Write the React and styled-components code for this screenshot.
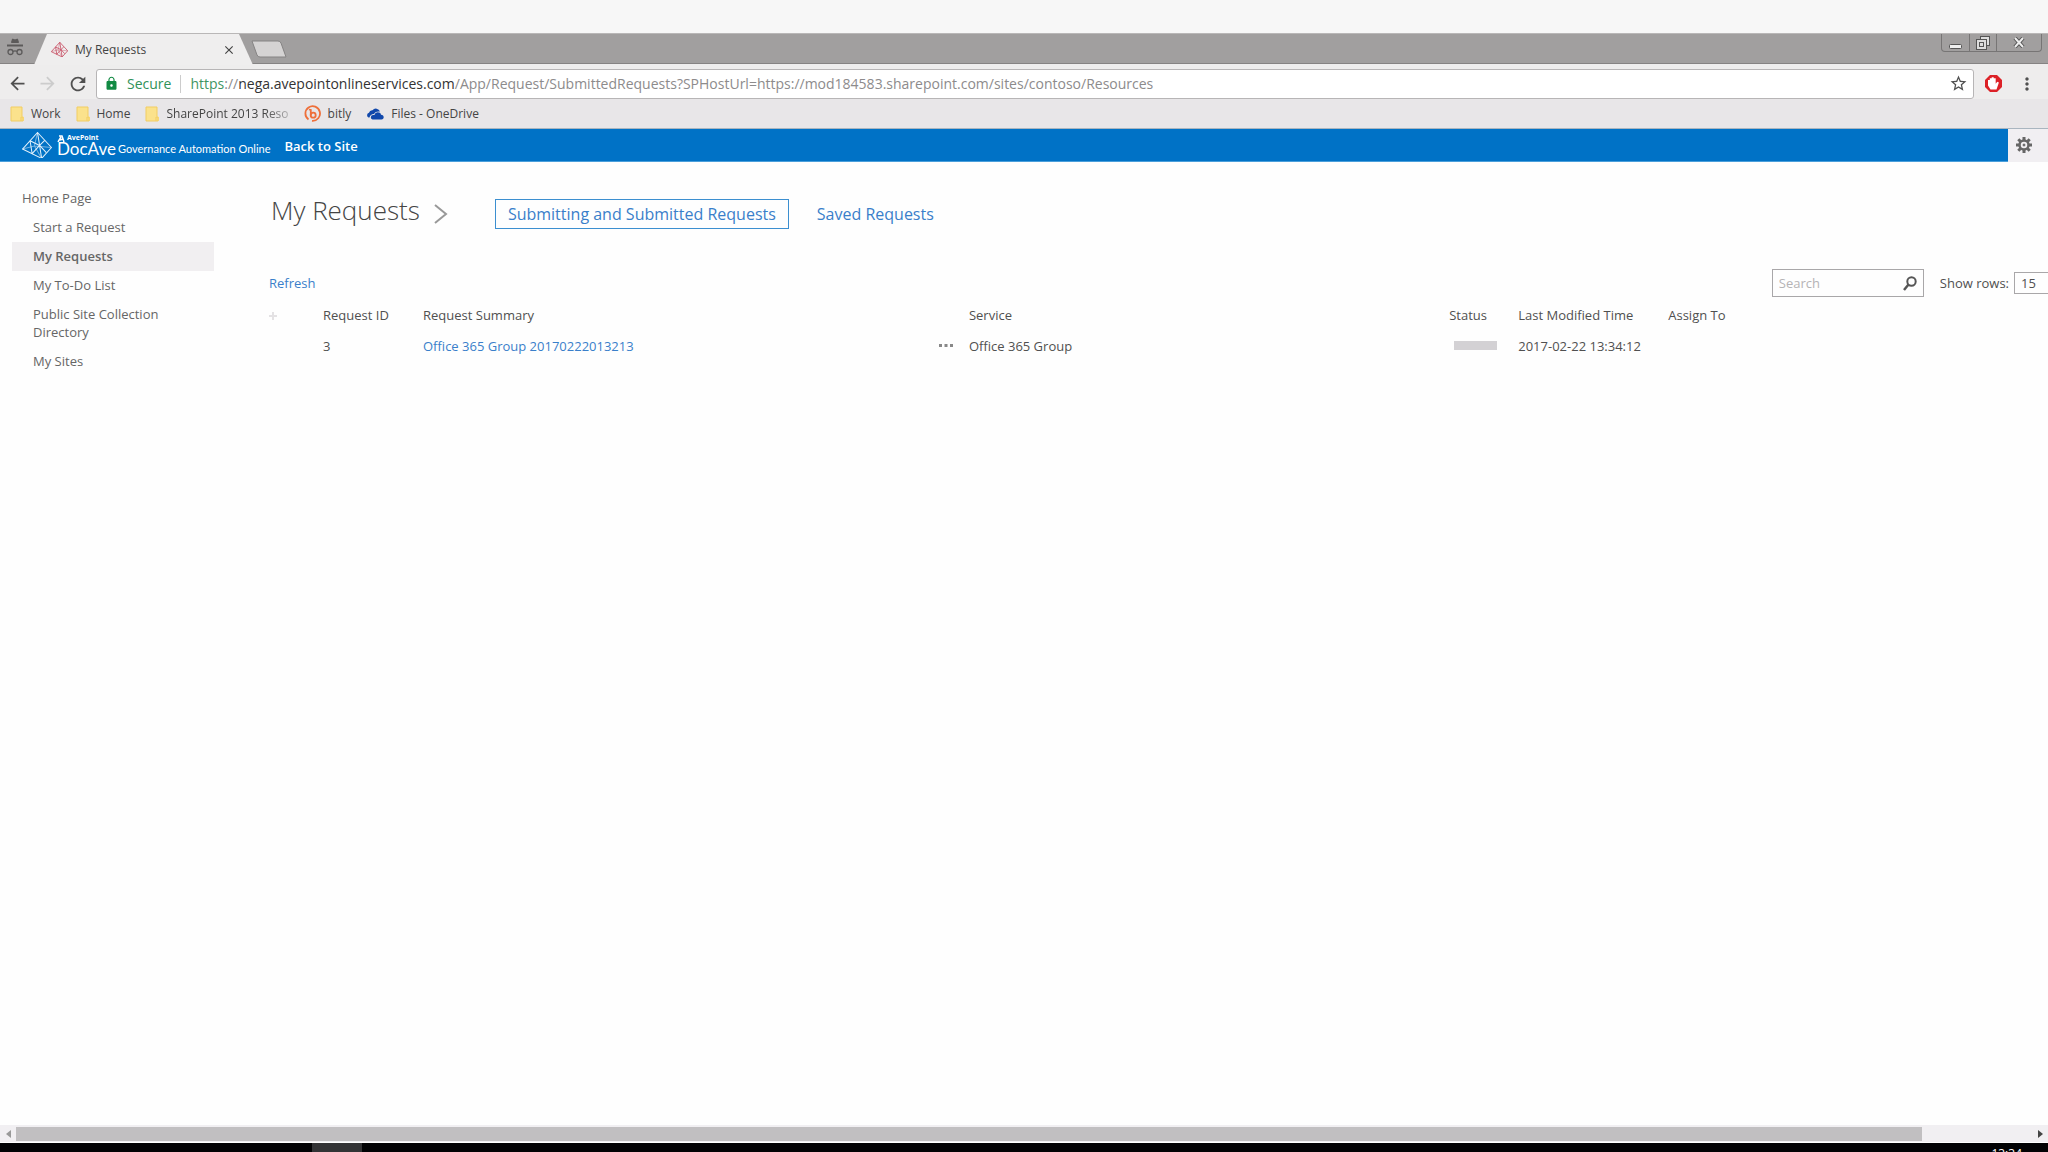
import styled, { createGlobalStyle } from "styled-components"
import { MdArrowBack, MdArrowForward, MdRefresh, MdLock, MdStarBorder, MdMoreVert, MdClose } from "react-icons/md"

const bookmarks = [
    { name: "Work", icon: "folder" },
    { name: "Home", icon: "folder" },
    { name: "SharePoint 2013 Reso", icon: "folder", faded: true },
    { name: "bitly", icon: "bitly" },
    { name: "Files - OneDrive", icon: "onedrive" },
]

const navItems = [
    { name: "Start a Request" },
    { name: "My Requests", active: true },
    { name: "My To-Do List" },
    { name: "Public Site Collection Directory" },
    { name: "My Sites" },
]

const requests = [
    { id: 3, summary: "Office 365 Group 20170222013213", service: "Office 365 Group", modified: "2017-02-22 13:34:12", assignTo: "" },
]

const GlobalStyle = createGlobalStyle`
*{
    box-sizing:border-box;
}
body{
    margin:0;
    background:#fefefe;
    color:#505050;
    font-family:"Open Sans","Noto Sans",sans-serif;
    font-size:13px;
    line-height:18px;
}
button,input,select{
    font:inherit;
    color:inherit;
    margin:0;
    padding:0;
    border:0;
    background:none;
}
a{
    text-decoration:none;
    color:inherit;
}
`
const Page = styled.div`
display:flex;
flex-direction:column;
height:100vh;
overflow:hidden;
`
const Desktop = styled.div`
flex:none;
height:33px;
background:#f7f7f7;
`
const TabStrip = styled.div`
flex:none;
display:flex;
height:31px;
background:#a19f9f;
border-top:1px solid #b9b7b7;
border-bottom:1px solid #858383;
`
const Incognito = styled.div`
width:34px;
padding:4px 0 0 6px;
`
const Tab = styled.div`
display:flex;
align-items:center;
width:219px;
height:31px;
padding:0 17px;
background:#efeeee;
font-size:12px;
color:#444;
clip-path:polygon(0 100%,13px 0,205px 0,100% 100%);

button{
    display:flex;
    margin-left:auto;
    color:#444;
}
span{
    margin-left:7px;
}
`
const NewTab = styled.button`
display:flex;
align-items:center;
margin-left:-4px;
padding-top:1px;
`
const WindowButtons = styled.div`
display:flex;
height:18px;
margin:0 6px 0 auto;
border:1px solid #777575;
border-top:0;
border-radius:0 0 4px 4px;
`
const WindowButton = styled.button`
display:flex;
align-items:center;
justify-content:center;
width:${props => props.$wide ? "45px" : "27px"};
border-left:${props => props.$wide || props.$mid ? "1px solid #777575" : "0"};
`
const Toolbar = styled.div`
flex:none;
display:flex;
align-items:center;
height:35px;
padding:4px 6px 0 5px;
background:#eeeded;
color:#555;
`
const ToolButton = styled.button`
display:flex;
justify-content:center;
width:${props => props.$width || 30}px;
color:${props => props.$faded ? "#ccc" : "#505050"};
`
const AddressBar = styled.div`
flex:1;
display:flex;
align-items:center;
height:30px;
margin-left:5px;
padding:0 4px 0 7px;
background:#fff;
border:1px solid #b7b5b6;
border-radius:3px;
font-size:14px;
`
const Secure = styled.span`
margin-left:8px;
padding-right:9px;
border-right:1px solid #ccc;
color:#2f9258;
`
const Url = styled.div`
flex:1;
margin-left:9px;
white-space:nowrap;
overflow:hidden;
color:#8d8b8c;

b{
    font-weight:400;
    color:#333;
}
i{
    font-style:normal;
    color:#3f9563;
}
`
const Bookmarks = styled.nav`
flex:none;
display:flex;
align-items:center;
gap:15px;
height:30px;
padding:0 10px;
background:#e8e6e8;
border-bottom:1px solid #a9b5bf;
font-size:12px;
color:#444;
`
const Bookmark = styled.a`
display:flex;
align-items:center;
gap:7px;

span{
    white-space:nowrap;
    mask-image:${props => props.$faded ? "linear-gradient(90deg,#000 80%,rgba(0,0,0,0.3))" : "none"};
}
`
const SiteHeader = styled.header`
flex:none;
display:flex;
align-items:center;
height:33px;
padding-left:22px;
background:#0072c6;
border-bottom:1px solid #4a9fdb;
color:#fff;
`
const Brand = styled.a`
display:flex;
align-items:center;
gap:5px;
`
const BrandName = styled.span`
display:flex;
flex-direction:column;

small{
    display:flex;
    align-items:center;
    gap:2px;
    font-size:7px;
    font-weight:700;
    line-height:8px;
}
span{
    font-family:Lato,sans-serif;
    font-size:17px;
    line-height:13px;
}
`
const Product = styled.span`
margin-left:-3px;
padding-top:8px;
font-family:Lato,sans-serif;
font-size:11px;
`
const BackLink = styled.a`
margin-left:14px;
padding-top:1px;
font-weight:600;
`
const Settings = styled.button`
display:flex;
align-items:center;
justify-content:center;
width:40px;
height:33px;
margin-left:auto;
padding-right:8px;
background:#f1eff2;
color:#666;
`
const Content = styled.div`
flex:1;
display:flex;
min-height:0;
`
const SideNav = styled.nav`
flex:none;
display:flex;
flex-direction:column;
width:214px;
padding:22px 0 0 12px;
color:#666;
`
const NavLink = styled.a`
padding:${props => props.$top ? "5px 10px 6px" : "5px 40px 6px 21px"};
background:${props => props.$active ? "#f1eff1" : "transparent"};
font-weight:${props => props.$active ? "600" : "400"};
`
const Main = styled.main`
flex:1;
min-width:0;
padding:32px 0 0 55px;
overflow:hidden;
`
const TitleRow = styled.div`
display:flex;
align-items:center;
height:40px;
padding-left:2px;

h1{
    margin:0 14px 8px 0;
    font-size:26px;
    line-height:32px;
    font-weight:300;
    color:#444;
}
`
const ViewButton = styled.button`
height:30px;
margin-left:${props => props.$active ? "47px" : "15px"};
padding:0 12px;
border:1px solid ${props => props.$active ? "#3c8fd0" : "transparent"};
font-size:16px;
color:#3a7fca;
`
const ListBar = styled.div`
display:flex;
align-items:center;
height:28px;
margin:35px -30px 0 0;
`
const Refresh = styled.button`
color:#3a7fca;
`
const SearchBox = styled.div`
display:flex;
align-items:center;
width:152px;
height:28px;
margin-left:auto;
padding:0 6px;
border:1px solid #a9a7a9;

input{
    flex:1;
    min-width:0;
    outline:0;
}
input::placeholder{
    color:#b5b3b5;
    opacity:1;
}
button{
    display:flex;
}
`
const RowsLabel = styled.label`
margin:0 5px 0 16px;
`
const RowsSelect = styled.select`
width:64px;
height:22px;
padding-left:6px;
border:1px solid #a9a7a9;
appearance:none;
`
const RequestTable = styled.table`
width:100%;
margin-top:2px;
table-layout:fixed;
border-collapse:collapse;

th,td{
    height:31px;
    padding:0;
    text-align:left;
    font-weight:400;
    white-space:nowrap;
}
td a{
    color:#3a7fca;
}
button{
    display:flex;
}
`
const Col = styled.col`
width:${props => props.$width};
`
const StatusBar = styled.div`
width:43px;
height:9px;
margin-left:5px;
background:#d3d1d4;
`
const ScrollTrack = styled.div`
flex:none;
display:flex;
align-items:center;
height:18px;
background:#f1eff2;
border-bottom:1px solid #fff;
`
const ScrollButton = styled.button`
display:flex;
justify-content:center;
width:16px;
`
const ScrollRail = styled.div`
flex:1;
display:flex;
padding-right:110px;
`
const ScrollThumb = styled.div`
flex:1;
height:14px;
background:#c1bfc1;
`
const Taskbar = styled.div`
flex:none;
display:flex;
height:9px;
padding:0 26px 0 312px;
background:#020204;
overflow:hidden;
`
const TaskItem = styled.div`
width:50px;
background:#333335;
`
const Clock = styled.time`
margin-left:auto;
padding-top:2px;
font-size:12px;
color:#fff;
`

function Pyramid({ size, color, line = 1 }) {
    return (
        <svg width={size} height={size * 26 / 29} viewBox="0 0 29 26" fill="none" stroke={color} strokeWidth={line} strokeLinejoin="round">
            <path d="M15 .5.5 16.500 19 25.500 28.500 15z" />
            <path d="M15 .5 19 25.500" />
            <path d="M7.800 8.500 17 13l5-5M7.800 8.500l2 12.500L17 13l6.500 7" />
            <path d="M.5 16.500 12 13.500 28.500 15M15 .5 12 13.500l7 12" strokeOpacity=".5" />
        </svg>
    )
}

function FolderIcon() {
    return (
        <svg width="14" height="16" viewBox="0 0 14 16">
            <path d="M1 1h11v9l2 1v4H1z" fill="#fbe28c" />
            <path d="M1 1h11v9M1 1v14h12v-4h-2v4" fill="none" stroke="#f2cd62" />
        </svg>
    )
}

function BitlyIcon() {
    return (
        <svg width="17" height="17" viewBox="0 0 17 17" fill="none" stroke="#ee6f3a" strokeWidth="1.800">
            <path d="M4.500 14.500A7.300 7.300 0 1 1 8 15.800" />
            <path d="M5 4.500l1.800.5v5.500" />
            <circle cx="9.200" cy="10.200" r="2.500" />
        </svg>
    )
}

function OneDriveIcon() {
    return (
        <svg width="18" height="12" viewBox="0 0 18 12" fill="#1148ab">
            <path d="M3.500 9.500H2.500A2.500 2.500 0 0 1 3 4.800 3.300 3.300 0 0 1 6.500 2.300 4.300 4.300 0 0 1 14 3.500C10.500 3 8.500 4.500 8 6 5.500 6 4 7.500 3.500 9.500z" />
            <path d="M6.500 11.500a2.300 2.300 0 0 1 .5-4.500h1.500c.5-3.500 6-3.500 6.500-.3 3.500 0 3.500 4.800.5 4.800z" />
        </svg>
    )
}

function BookmarkIcon({ type }) {
    if (type === "bitly") return <BitlyIcon />
    if (type === "onedrive") return <OneDriveIcon />
    return <FolderIcon />
}

function BrowserChrome() {
    return (
        <>
            <TabStrip>
                <Incognito>
                    <svg width="18" height="19" viewBox="0 0 18 19" fill="none" stroke="#5c5a5a">
                        <path d="M5.500 4.500l1-3.500 2.500 1 2.500-1 1 3.500z" fill="#5c5a5a" />
                        <path d="M1 7.500h16" strokeWidth="2" />
                        <circle cx="4.500" cy="14" r="2.500" strokeWidth="1.300" />
                        <circle cx="13.500" cy="14" r="2.500" strokeWidth="1.300" />
                        <path d="M7 13.500c1.500-1 2.500-1 4 0" strokeWidth="1.300" />
                    </svg>
                </Incognito>
                <Tab>
                    <Pyramid size={17} color="#c9566a" line={1.5} />
                    <span>My Requests</span>
                    <button aria-label="Close tab"><MdClose size={14} /></button>
                </Tab>
                <NewTab aria-label="New tab">
                    <svg width="38" height="18" viewBox="0 0 38 18">
                        <path d="M3 1h26q2 0 3 2l5 14H11q-2 0-3-2z" fill="#d5d3d3" stroke="#858383" />
                    </svg>
                </NewTab>
                <WindowButtons>
                    <WindowButton aria-label="Minimize">
                        <svg width="13" height="14" viewBox="0 0 13 14">
                            <rect x="0.500" y="8.500" width="12" height="4" rx="1" fill="#eee" stroke="#555" />
                        </svg>
                    </WindowButton>
                    <WindowButton $mid aria-label="Restore">
                        <svg width="14" height="14" viewBox="0 0 14 14" fill="#ddd" stroke="#555">
                            <rect x="4.500" y="0.500" width="9" height="9" />
                            <rect x="0.500" y="3.500" width="10" height="10" />
                            <rect x="3.500" y="6.500" width="4" height="4" />
                        </svg>
                    </WindowButton>
                    <WindowButton $wide aria-label="Close">
                        <svg width="12" height="11" viewBox="0 0 12 11">
                            <path d="M2 1l8 9M10 1l-8 9" stroke="#555" strokeWidth="4" />
                            <path d="M2 1l8 9M10 1l-8 9" stroke="#eee" strokeWidth="2" />
                        </svg>
                    </WindowButton>
                </WindowButtons>
            </TabStrip>
            <Toolbar>
                <ToolButton $width={24} aria-label="Back"><MdArrowBack size={21} /></ToolButton>
                <ToolButton $width={36} $faded aria-label="Forward"><MdArrowForward size={21} /></ToolButton>
                <ToolButton $width={26} aria-label="Reload"><MdRefresh size={22} /></ToolButton>
                <AddressBar>
                    <MdLock size={15} color="#128a43" />
                    <Secure>Secure</Secure>
                    <Url role="textbox" aria-label="Address"><i>https</i>://<b>nega.avepointonlineservices.com</b>/App/Request/SubmittedRequests?SPHostUrl=https://mod184583.sharepoint.com/sites/contoso/Resources</Url>
                    <ToolButton $width={22} aria-label="Bookmark this page"><MdStarBorder size={19} /></ToolButton>
                </AddressBar>
                <ToolButton $width={38} aria-label="Blocker">
                    <svg width="17" height="17" viewBox="0 0 17 17">
                        <path d="M5 0h7l5 5v7l-5 5H5l-5-5V5z" fill="#dc2127" />
                        <path d="M5.500 14.500 3 10.500V5h1.800V3.300h1.900V2.300h2v1h2v5.500l1.600-2 1.600.7-2.400 7z" fill="#fff" />
                    </svg>
                </ToolButton>
                <ToolButton aria-label="Menu"><MdMoreVert size={20} /></ToolButton>
            </Toolbar>
            <Bookmarks>
                {bookmarks.map(item => (
                    <Bookmark href="#" key={item.name} $faded={item.faded}>
                        <BookmarkIcon type={item.icon} />
                        <span>{item.name}</span>
                    </Bookmark>
                ))}
            </Bookmarks>
        </>
    )
}

function RequestList() {
    return (
        <RequestTable>
            <colgroup>
                <Col $width="54px" />
                <Col $width="100px" />
                <Col $width="29%" />
                <Col $width="30px" />
                <Col $width="27%" />
                <Col $width="69px" />
                <Col $width="150px" />
                <Col />
            </colgroup>
            <thead>
                <tr>
                    <th>
                        <svg width="8" height="8" viewBox="0 0 8 8" stroke="#e4e2e4" strokeWidth="2">
                            <path d="M4 0v8M0 4h8" />
                        </svg>
                    </th>
                    <th>Request ID</th>
                    <th>Request Summary</th>
                    <th></th>
                    <th>Service</th>
                    <th>Status</th>
                    <th>Last Modified Time</th>
                    <th>Assign To</th>
                </tr>
            </thead>
            <tbody>
                {requests.map(item => (
                    <tr key={item.id}>
                        <td></td>
                        <td>{item.id}</td>
                        <td><a href="#">{item.summary}</a></td>
                        <td>
                            <button aria-label="More actions">
                                <svg width="14" height="3" viewBox="0 0 14 3" fill="#888">
                                    <path d="M0 0h3v3H0zM5.500 0h3v3h-3zM11 0h3v3h-3z" />
                                </svg>
                            </button>
                        </td>
                        <td>{item.service}</td>
                        <td><StatusBar /></td>
                        <td>{item.modified}</td>
                        <td>{item.assignTo}</td>
                    </tr>
                ))}
            </tbody>
        </RequestTable>
    )
}

export default function App() {
    return (
        <Page>
            <GlobalStyle />
            <Desktop />
            <BrowserChrome />
            <SiteHeader>
                <Brand href="#">
                    <Pyramid size={30} color="#e2f1fb" />
                    <BrandName>
                        <small>
                            <svg width="8" height="7" viewBox="0 0 8 7" fill="none" stroke="#fff" strokeWidth="1.500">
                                <path d="M2 1h3l2 6M4 2 1 7M3 5l3-1" />
                            </svg>
                            AvePoint
                        </small>
                        <span>DocAve</span>
                    </BrandName>
                    <Product>Governance Automation Online</Product>
                </Brand>
                <BackLink href="#">Back to Site</BackLink>
                <Settings aria-label="Settings">
                    <svg width="16" height="16" viewBox="0 0 16 16" fill="none" stroke="#666">
                        <circle cx="8" cy="8" r="4.500" strokeWidth="2.500" />
                        <circle cx="8" cy="8" r="1" fill="#666" />
                        <path d="M8 0v3M8 13v3M0 8h3M13 8h3M2.300 2.300l2.200 2.200M11.500 11.500l2.200 2.200M2.300 13.700l2.200-2.200M11.500 4.500l2.200-2.200" strokeWidth="3" />
                    </svg>
                </Settings>
            </SiteHeader>
            <Content>
                <SideNav>
                    <NavLink href="#" $top>Home Page</NavLink>
                    {navItems.map(item => (
                        <NavLink href="#" key={item.name} $active={item.active}>{item.name}</NavLink>
                    ))}
                </SideNav>
                <Main>
                    <TitleRow>
                        <h1>My Requests</h1>
                        <svg width="14" height="20" viewBox="0 0 14 20" fill="none" stroke="#999" strokeWidth="2">
                            <path d="M1 1l11 9-11 9" />
                        </svg>
                        <ViewButton $active>Submitting and Submitted Requests</ViewButton>
                        <ViewButton>Saved Requests</ViewButton>
                    </TitleRow>
                    <ListBar>
                        <Refresh>Refresh</Refresh>
                        <SearchBox>
                            <input type="text" placeholder="Search" aria-label="Search" />
                            <button aria-label="Run search">
                                <svg width="14" height="15" viewBox="0 0 14 15" fill="none" stroke="#555" strokeWidth="2">
                                    <circle cx="8.500" cy="5.500" r="4.200" />
                                    <path d="M5.500 8.500 1 14" strokeWidth="2.500" />
                                </svg>
                            </button>
                        </SearchBox>
                        <RowsLabel htmlFor="rows">Show rows:</RowsLabel>
                        <RowsSelect id="rows" defaultValue="15">
                            <option>15</option>
                            <option>30</option>
                            <option>50</option>
                        </RowsSelect>
                    </ListBar>
                    <RequestList />
                </Main>
            </Content>
            <ScrollTrack>
                <ScrollButton aria-label="Scroll left">
                    <svg width="5" height="8" viewBox="0 0 5 8"><path d="M5 0v8L0 4z" fill="#999" /></svg>
                </ScrollButton>
                <ScrollRail><ScrollThumb /></ScrollRail>
                <ScrollButton aria-label="Scroll right">
                    <svg width="5" height="8" viewBox="0 0 5 8"><path d="M0 0v8l5-4z" fill="#444" /></svg>
                </ScrollButton>
            </ScrollTrack>
            <Taskbar>
                <TaskItem />
                <Clock>13:34</Clock>
            </Taskbar>
        </Page>
    )
}
